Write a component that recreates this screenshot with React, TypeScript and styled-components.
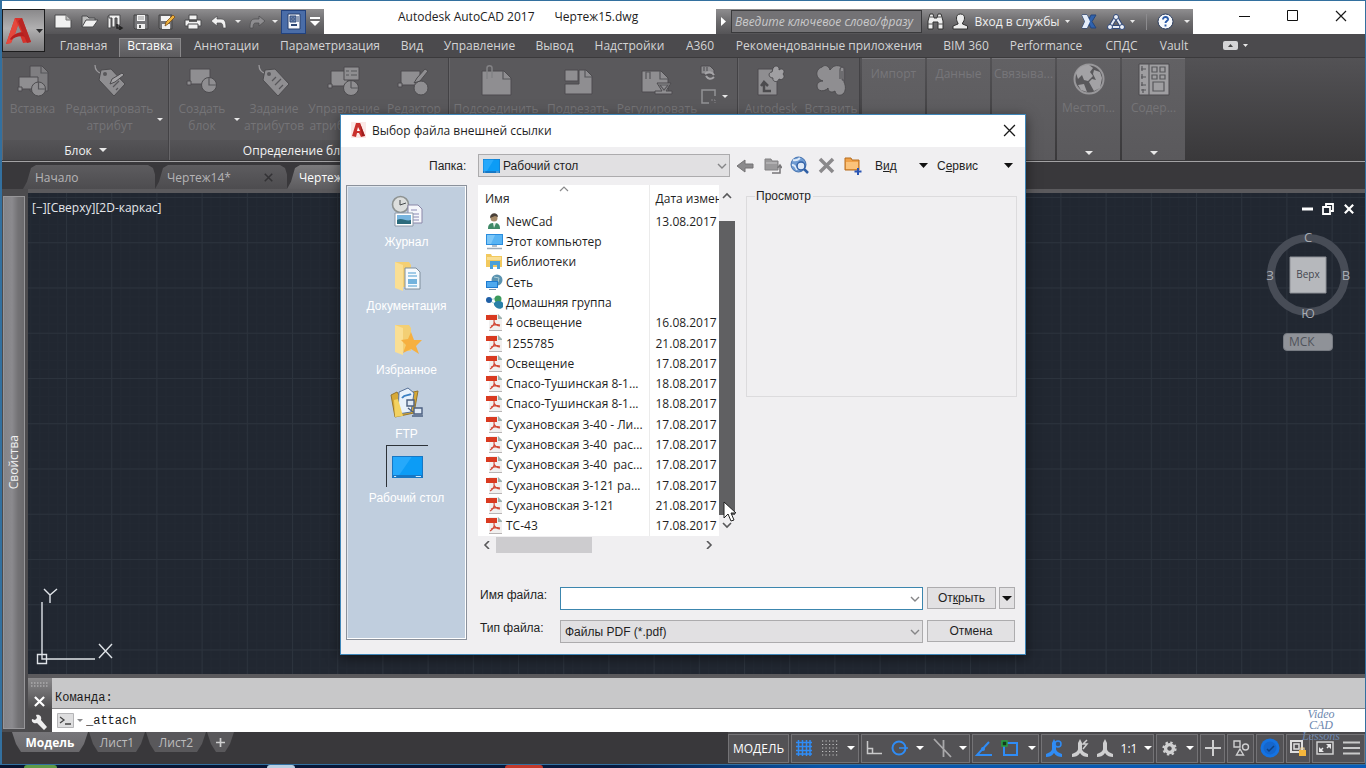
import React from 'react';
import styled, { createGlobalStyle, css } from 'styled-components';

const ui = `"Open Sans", "Noto Sans", sans-serif`;
const dlg = `"Liberation Sans", Arial, sans-serif`;

const GlobalStyle = createGlobalStyle`
  * { box-sizing: border-box; }
  body { margin: 0; background: #0b2a5c; font-family: ${ui}; font-size: 12px; }
  button, input, select { font-family: inherit; font-size: inherit; margin: 0; padding: 0; border-radius: 0; }
  button { background: none; border: 0; color: inherit; white-space: nowrap; }
  svg { display: block; flex: none; }
`;

const Screen = styled.div`
  position: relative;
  display: flex;
  flex-direction: column;
  min-height: 100vh;
  overflow: hidden;
`;

const AppWindow = styled.div`
  flex: 1;
  display: flex;
  flex-direction: column;
  border: solid #33709f;
  border-width: 1px 1px 1px 2px;
  background: #39383b;
`;

/* ---------- header ---------- */

const Header = styled.header`
  display: grid;
  grid-template-columns: 43px 1fr;
  grid-template-rows: 33px 23px;
  background: linear-gradient(#ffffff 33px, #4b4a4d 33px);
`;

const AppButton = styled.button`
  grid-row: 1 / 3;
  height: 43px;
  margin-top: 8px;
  display: flex;
  align-items: center;
  justify-content: center;
  gap: 3px;
  border: 1px solid #1c1c1d;
  background: linear-gradient(#8a898b, #b1b0b1 45%, #7c7b7d);
`;

const TitleRow = styled.div`
  display: flex;
  align-items: flex-end;
  min-width: 0;
`;

const barBg = css`
  background: linear-gradient(#8f8e90, #6c6b6d 50%, #555457);
`;

const QuickBar = styled.div`
  ${barBg}
  height: 25px;
  width: 279px;
  display: flex;
  align-items: center;
  padding-left: 4px;
`;

const QuickButton = styled.button<{ $w: number; $on?: boolean }>`
  width: ${p => p.$w}px;
  height: 24px;
  display: flex;
  align-items: center;
  justify-content: center;
  ${p => p.$on && css`
    background: #4a6da8;
    border: 1px solid #22427e;
  `}
`;

const WindowTitle = styled.h1`
  flex: 1;
  margin: 0;
  padding-left: 74px;
  height: 25px;
  display: flex;
  gap: 20px;
  line-height: 16px;
  font-size: 12px;
  font-weight: 400;
  color: #1d1d1d;
  white-space: nowrap;
`;

const InfoBar = styled.div`
  ${barBg}
  height: 25px;
  width: 477px;
  display: flex;
  align-items: center;
  color: #f0f0f0;
`;

const SearchInput = styled.input`
  width: 191px;
  height: 23px;
  padding: 0 3px;
  font-style: italic;
  color: #e2e2e2;
  background: #737275;
  border: 1px solid #3a3a3c;
  &::placeholder { color: #c9c9ca; opacity: 1; }
`;

const InfoButton = styled.button<{ $w: number; $gap?: number }>`
  width: ${p => p.$w}px;
  height: 24px;
  display: flex;
  align-items: center;
  justify-content: center;
  gap: ${p => p.$gap ?? 5}px;
`;

const InfoDivider = styled.span`
  width: 1px;
  height: 16px;
  margin: 0 8px;
  background: #8c8b8e;
`;

const WindowButtons = styled.div`
  display: flex;
  align-self: flex-start;
  margin-left: 28px;
`;

const WindowButton = styled.button`
  width: 48px;
  height: 30px;
  display: flex;
  align-items: center;
  justify-content: center;
`;

const RibbonTabs = styled.nav`
  display: flex;
  align-items: flex-end;
  padding-left: 3px;
  color: #d4d4d5;
`;

const RibbonTab = styled.button<{ $w: number; $active?: boolean }>`
  width: ${p => p.$w}px;
  height: 19px;
  padding-bottom: 3px;
  line-height: 16px;
  text-align: center;
  ${p => p.$active && css`
    background: linear-gradient(#747376, #5c5b5e);
    box-shadow: inset 1px 1px 0 #89888a, inset -1px 0 0 #89888a;
    color: #ffffff;
  `}
`;

/* ---------- ribbon ---------- */

const Ribbon = styled.div`
  display: flex;
  height: 105px;
  background: linear-gradient(#535255, #39383a);
  border-top: 1px solid #3b3a3c;
  border-bottom: 1px solid #a3a2a4;
`;

const Panel = styled.section<{ $w: number }>`
  width: ${p => p.$w}px;
  height: 102px;
  display: flex;
  flex-direction: column;
  background: #5a595c;
  border-right: 1px solid #434245;
  border-left: 1px solid #666568;
`;

const PanelTools = styled.div`
  flex: 1;
  display: flex;
  padding-top: 7px;
  overflow: hidden;
`;

const PanelTitle = styled.button`
  height: 20px;
  display: flex;
  align-items: center;
  justify-content: center;
  gap: 7px;
  color: #f2f2f2;
  background: linear-gradient(#555457, #49484b);
`;

const Tool = styled.button<{ $w: number }>`
  flex: none;
  width: ${p => p.$w}px;
  display: flex;
  flex-direction: column;
  align-items: center;
  gap: 3px;
  line-height: 17px;
  color: #757477;
`;

const ToolLabel = styled.span`
  white-space: pre;
  text-align: center;
`;

const ToolArrow = styled.button`
  flex: none;
  width: 6px;
  height: 22px;
  margin-top: 43px;
  display: flex;
  align-items: center;
  justify-content: center;
`;

const SmallTools = styled.div`
  display: flex;
  flex-direction: column;
  gap: 8px;
`;

const SmallRow = styled.div`
  display: flex;
  align-items: center;
  gap: 5px;
`;

const NarrowPanel = styled.section`
  width: 63px;
  height: 102px;
  margin-left: 2px;
  display: flex;
  flex-direction: column;
  align-items: center;
  justify-content: space-between;
  padding: 3px 0 5px;
  background: linear-gradient(#626164, #5a595c);
  border-top: 1px solid #77767a;
  color: #77767a;
`;

const NarrowLabel = styled.span`
  line-height: 16px;
  padding-top: 4px;
`;

/* ---------- drawing tabs ---------- */

const FileTabs = styled.nav`
  height: 27px;
  display: flex;
  align-items: flex-end;
  padding-left: 21px;
`;

const FileTab = styled.button<{ $active?: boolean }>`
  width: 132px;
  height: 24px;
  padding: 0 14px 0 12px;
  display: flex;
  align-items: center;
  justify-content: space-between;
  color: ${p => (p.$active ? '#ffffff' : '#b5b4b6')};
  background: ${p => (p.$active ? 'linear-gradient(#7b7a7c, #5d5c5f)' : 'linear-gradient(#5d5c5f, #4d4c4f)')};
  clip-path: polygon(0 100%, 4px 70%, 8px 12%, 13px 0, 125px 0, 130px 12%, 132px 40%, 132px 100%);
`;

/* ---------- work area ---------- */

const Work = styled.div`
  flex: 1;
  display: flex;
  background: #5b5a5d;
`;

const PaletteStrip = styled.aside`
  width: 26px;
  padding: 7px 3px 3px 1px;
  display: flex;
  background: #4c4b4e;
`;

const PaletteTitle = styled.div`
  flex: 1;
  display: flex;
  flex-direction: column;
  align-items: center;
  justify-content: center;
  background: linear-gradient(90deg, #858488, #8b8a8e 40%, #737275 70%, #6a696c);
  border: 1px solid #979699;
  color: #f0f0f0;
  span { writing-mode: vertical-rl; transform: rotate(180deg); line-height: 16px; }
`;

const DrawColumn = styled.div`
  flex: 1;
  min-width: 0;
  display: flex;
  flex-direction: column;
  padding-top: 4px;
`;

const Canvas = styled.main`
  position: relative;
  flex: 1;
  display: flex;
  justify-content: space-between;
  background: #212731;
  color: #e4e6ea;
`;

const GridLayer = styled.svg`
  position: absolute;
  inset: 0;
  width: 100%;
  height: 100%;
`;

const CanvasLeft = styled.div`
  position: relative;
  display: flex;
  flex-direction: column;
  justify-content: space-between;
  padding: 7px 4px 9px;
  line-height: 16px;
`;

const CanvasRight = styled.div`
  position: relative;
  width: 106px;
  padding: 8px 8px 0 0;
  display: flex;
  flex-direction: column;
  align-items: center;
`;

const CanvasControls = styled.div`
  align-self: flex-end;
  display: flex;
  gap: 5px;
  margin-bottom: 8px;
`;

const ViewButton = styled.button`
  width: 16px;
  height: 16px;
  display: flex;
  align-items: center;
  justify-content: center;
`;

const UcsButton = styled.button`
  width: 50px;
  height: 18px;
  margin-top: 8px;
  padding-left: 5px;
  text-align: left;
  line-height: 14px;
  color: #4f535b;
  background: #8f9298;
  border: 1px solid #777b82;
  border-radius: 4px;
`;

const CommandArea = styled.div`
  display: flex;
  height: 58px;
  padding-top: 4px;
  background: #5b5a5d;
`;

const CommandGrip = styled.div`
  width: 24px;
  display: flex;
  flex-direction: column;
  align-items: center;
  justify-content: space-between;
  padding: 4px 1px 1px 0;
  background: linear-gradient(#8a898b, #4b4a4c 60%);
`;

const CommandLines = styled.div`
  flex: 1;
  display: flex;
  flex-direction: column;
  font-family: "Liberation Mono", monospace;
  font-size: 12px;
  color: #1a1a1a;
`;

const CommandHistory = styled.div`
  height: 31px;
  padding: 11px 3px 0;
  line-height: 18px;
  background: #c8c8c9;
  border-bottom: 1px solid #868688;
`;

const CommandPrompt = styled.label`
  flex: 1;
  display: flex;
  align-items: center;
  padding-left: 5px;
  gap: 3px;
  background: #ffffff;
  input { flex: 1; border: 0; outline: 0; background: none; color: inherit; }
`;

/* ---------- status bar ---------- */

const BottomRow = styled.footer`
  height: 32px;
  display: flex;
  justify-content: space-between;
`;

const LayoutTabs = styled.nav`
  display: flex;
  padding-left: 10px;
`;

const LayoutTab = styled.button<{ $w: number; $active?: boolean }>`
  width: ${p => p.$w}px;
  height: 20px;
  margin-right: 1px;
  display: flex;
  align-items: center;
  justify-content: center;
  font-weight: ${p => (p.$active ? 700 : 400)};
  color: ${p => (p.$active ? '#ffffff' : '#bdbcbe')};
  background: ${p => (p.$active ? 'linear-gradient(#77767a, #69686b)' : '#59585b')};
  clip-path: polygon(0 0, 100% 0, calc(100% - 4px) 60%, calc(100% - 9px) 100%, 9px 100%, 4px 60%);
`;

const StatusBar = styled.div`
  display: flex;
  gap: 2px;
  height: 31px;
  padding-top: 2px;
  background: #4a494c;
  color: #ffffff;
`;

const StatusGroup = styled.div`
  display: flex;
  background: #535255;
  outline: 1px solid #747376;
  outline-offset: -1px;
`;

const StatusButton = styled.button<{ $w: number }>`
  width: ${p => p.$w}px;
  height: 28px;
  display: flex;
  align-items: center;
  justify-content: center;
`;

const Taskbar = styled.div`
  height: 3px;
  display: flex;
  background: linear-gradient(90deg, #07142f, #071a3f 45%, #0a55a8 60%, #0a5cb8);
`;

const TaskItem = styled.span<{ $left: number; $w: number; $c: string }>`
  width: ${p => p.$w}px;
  margin-left: ${p => p.$left}px;
  border-radius: 8px 8px 0 0;
  background: ${p => p.$c};
`;

const Watermark = styled.div`
  position: absolute;
  right: 22px;
  bottom: 26px;
  width: 46px;
  line-height: 11px;
  font-family: "Liberation Serif", serif;
  font-size: 12px;
  font-style: italic;
  text-align: center;
  color: #6d87ae;
  pointer-events: none;
`;

/* ---------- dialog ---------- */

const DialogLayer = styled.div`
  position: absolute;
  inset: 0;
  display: flex;
  align-items: flex-start;
  justify-content: center;
  padding-top: 114px;
`;

const Dialog = styled.section`
  position: relative;
  width: 686px;
  height: 541px;
  display: flex;
  flex-direction: column;
  background: #f0eff1;
  border: 1px solid #3f86b8;
  box-shadow: 0 3px 12px rgba(0, 0, 0, 0.5);
  font-family: ${dlg};
  color: #1f1f1f;
`;

const DialogTitle = styled.header`
  height: 32px;
  display: flex;
  align-items: center;
  gap: 6px;
  padding: 0 3px 2px 10px;
  background: #ffffff;
  font-family: ${ui};
  h2 { flex: 1; margin: 0; font-size: 12px; font-weight: 400; }
`;

const DialogBody = styled.div`
  flex: 1;
  display: flex;
  flex-direction: column;
  padding: 7px 8px 14px 5px;
`;

const FolderRow = styled.div`
  display: flex;
  align-items: center;
  height: 23px;
  label { width: 132px; padding-left: 83px; }
`;

const Combo = styled.div<{ $w: number; $edit?: boolean }>`
  position: relative;
  width: ${p => p.$w}px;
  height: 23px;
  display: flex;
  color: #8b8b8d;
  select, input {
    width: 100%;
    padding: 0 20px 0 4px;
    appearance: none;
    outline: 0;
    color: #1f1f1f;
    background: ${p => (p.$edit ? '#ffffff' : '#e1e0e2')};
    border: 1px solid ${p => (p.$edit ? '#3c86ae' : '#acabad')};
  }
`;

const FolderSelect = styled.select`
  && { padding-left: 24px; }
`;

const ComboArrow = styled.span`
  position: absolute;
  right: 3px;
  top: 8px;
  pointer-events: none;
`;

const ComboIcon = styled.span`
  position: absolute;
  left: 5px;
  top: 5px;
  pointer-events: none;
`;

const IconButton = styled.button<{ $w: number }>`
  width: ${p => p.$w}px;
  height: 23px;
  display: flex;
  align-items: center;
  justify-content: center;
`;

const MenuButton = styled.button<{ $w: number }>`
  width: ${p => p.$w}px;
  height: 23px;
  margin-left: 9px;
  display: flex;
  align-items: center;
  justify-content: space-between;
  color: #1f1f1f;
`;

const Middle = styled.div`
  flex: 1;
  display: flex;
  margin-top: 8px;
`;

const Places = styled.nav`
  width: 121px;
  height: 455px;
  padding-top: 3px;
  background: #c0cede;
  border: 1px solid #8b919b;
  box-shadow: inset -1px -1px 0 #ffffff, inset 1px 1px 0 #dfe6ee;
`;

const Place = styled.button<{ $active?: boolean }>`
  width: 100%;
  height: 64px;
  display: flex;
  flex-direction: column;
  align-items: center;
  color: #ffffff;
  line-height: 16px;
  span {
    width: 42px;
    height: 42px;
    margin-bottom: 3px;
    display: flex;
    align-items: center;
    justify-content: center;
    border: solid ${p => (p.$active ? '#2d3238' : 'transparent')};
    border-width: 1px 0 0 1px;
  }
`;

const Right = styled.div`
  flex: 1;
  margin-left: 11px;
  display: flex;
  flex-direction: column;
  justify-content: space-between;
`;

const ListRow = styled.div`
  display: flex;
  justify-content: space-between;
`;

const ListBox = styled.div`
  width: 257px;
  display: grid;
  grid-template-columns: 241px 16px;
  grid-template-rows: 351px 17px;
`;

const TableClip = styled.div`
  overflow: hidden;
  background: #ffffff;
  font-family: ${ui};
`;

const FileTable = styled.table`
  width: 290px;
  height: 351px;
  table-layout: fixed;
  border-collapse: collapse;
  th, td { padding: 0 0 0 6px; text-align: left; font-weight: 400; white-space: pre; overflow: hidden; }
  th { position: relative; height: 26px; }
  tr > :first-child { width: 171px; padding-left: 8px; border-right: 1px solid #ebebeb; }
  thead tr > :first-child { padding-left: 7px; }
`;

const FileName = styled.span`
  display: flex;
  align-items: center;
  gap: 3px;
`;

const SortMark = styled.span`
  position: absolute;
  left: 81px;
  top: 0;
`;

const VScroll = styled.div`
  display: flex;
  flex-direction: column;
  align-items: center;
  justify-content: space-between;
  padding: 7px 0;
`;

const VThumb = styled.div`
  width: 16px;
  height: 294px;
  margin-top: 15px;
  background: #606062;
`;

const HScroll = styled.div`
  display: flex;
  align-items: center;
  padding: 0 5px 0 4px;
`;

const HThumb = styled.div`
  width: 96px;
  height: 16px;
  margin: 0 auto 0 4px;
  background: #cdcccf;
`;

const Preview = styled.fieldset`
  width: 271px;
  height: 208px;
  margin: 4px 0 0;
  padding: 0 8px;
  border: 1px solid #dcdbdd;
  legend { padding: 0 2px 0 1px; line-height: 14px; }
`;

const Fields = styled.div`
  display: grid;
  grid-template-columns: 82px 363px 1fr;
  row-gap: 10px;
  padding-right: 2px;
  margin-bottom: -3px;
  label { padding: 1px 0 0 2px; }
`;

const Actions = styled.div`
  display: flex;
  gap: 3px;
  padding-left: 4px;
`;

const PushButton = styled.button<{ $w?: number }>`
  ${p => (p.$w ? `width: ${p.$w}px;` : 'flex: 1;')}
  height: 22px;
  display: flex;
  align-items: center;
  justify-content: center;
  background: #e2e1e3;
  border: 1px solid #adacae;
  white-space: pre;
`;

const Pointer = styled.svg`
  position: absolute;
  left: 382px;
  top: 386px;
`;

/* ---------- drawings ---------- */

const Down = ({ w = 6, c = '#e8e8e8' }: { w?: number; c?: string }) => (
  <svg width={w} height={Math.ceil(w / 2)} viewBox="0 0 10 5" preserveAspectRatio="none"><path d="M0 0h10L5 5z" fill={c} /></svg>
);

const Chevron = ({ r = 0, c = '#58585a', w = 1.6 }: { r?: number; c?: string; w?: number }) => (
  <svg width="10" height="8" viewBox="-5 -4 10 8"><path d="M-4 -2L0 2L4 -2" transform={`rotate(${r})`} fill="none" stroke={c} strokeWidth={w} /></svg>
);

const Logo = ({ s = 28 }: { s?: number }) => (
  <svg width={s} height={s} viewBox="0 0 28 28">
    <path d="M10 1h7l9 24-8 1-3-8-5-1-4 9-5 1z" fill="#d6322c" />
    <path d="M13 8l-3 9h7z" fill="#8f8f92" />
    <path d="M10 1l-9 26 5-1 4-9 3-9z" fill="#e5483d" />
    <path d="M5 22c4-6 11-8 16-6l2 5c-6-3-12-2-17 2z" fill="#b61f1f" />
    <path d="M17 1l9 24-4 1-9-22z" fill="#b92624" />
  </svg>
);

const DialogLogo = () => (
  <svg width="15" height="16" viewBox="0 0 15 16">
    <rect width="15" height="16" fill="#fbe9e7" />
    <path d="M5 1h4l5 13-4 1-2-4H6l-1 4-4-1z" fill="#c9302c" />
    <path d="M7 5L6 9h3z" fill="#fff" />
    <path d="M9 1l5 13-3 0z" fill="#9d1f1f" />
  </svg>
);

const q = { fill: '#f1f1f1', stroke: '#4a4a4c', strokeWidth: 1 };
const NewIcon = () => <svg width="18" height="15" viewBox="0 0 18 15"><path d="M1 1h11l5 5v8H1z" {...q} /><path d="M12 1v5h5" fill="#bbb" stroke="#777" /></svg>;
const OpenIcon = () => <svg width="18" height="15" viewBox="0 0 18 15"><path d="M1 13V2h5l2 2h6v3" {...q} fill="#bdbdbd" /><path d="M1 13L5 6h12l-5 7z" {...q} /></svg>;
const OpenWebIcon = () => <svg width="18" height="17" viewBox="0 0 18 17"><path d="M2 3h3v12H2z" {...q} /><path d="M3 5V2h11v10h-3V5H9v9H6V5z" {...q} /><path d="M11 11v4h4M13 13l3 2-3 2" fill="none" stroke="#222" strokeWidth="1.500" /></svg>;
const SaveIcon = () => <svg width="16" height="16" viewBox="0 0 16 16"><path d="M1 1h14v14H2l-1-1z" fill="#77777a" stroke="#444" /><path d="M4 1h8v6H4z" fill="#f4f4f4" /><path d="M5 3h6M5 5h6" stroke="#999" /><path d="M4 10h8v5H4z" fill="#efefef" /><path d="M6 11h2v3H6z" fill="#555" /></svg>;
const SaveAsIcon = () => <svg width="18" height="16" viewBox="0 0 18 16"><path d="M1 1h13v14H2l-1-1z" fill="#77777a" stroke="#444" /><path d="M3 2h9v5H3z" fill="#f4f4f4" /><path d="M4 10h8v5H4z" fill="#efefef" /><path d="M7 12L8 8l7-7 2 2-7 7z" fill="#eeb23c" stroke="#7b4c17" strokeWidth=".8" /></svg>;
const PrintIcon = () => <svg width="18" height="16" viewBox="0 0 18 16"><path d="M5 1h8v5H5z" {...q} /><path d="M1 6h16v6H1z" {...q} /><path d="M4 10h10v5H4z" {...q} /><path d="M5 7h8" stroke="#333" strokeWidth="1.500" /></svg>;
const UndoIcon = ({ c = '#f1f1f1', f = false }: { c?: string; f?: boolean }) => (
  <svg width="16" height="14" viewBox="0 0 16 14"><path d="M0 6l6-5v3h4c4 0 5 3 5 9h-3c0-4-1-5-3-5H6v3z" transform={f ? 'translate(16 0) scale(-1 1)' : undefined} fill={c} stroke="#4c4c4e" strokeWidth=".7" /></svg>
);
const WorkspaceIcon = () => <svg width="14" height="17" viewBox="0 0 14 17"><path d="M1 1h12v15H1z" fill="#f4f6fa" stroke="#29406d" /><path d="M3 3h6v6H3z" fill="#6d85b0" stroke="#2d4674" /><path d="M5 5h2v2H5zM11 3v6" stroke="#2d4674" fill="#fff" /><path d="M4 12h6" stroke="#2d4674" strokeWidth="2" /></svg>;
const QuickMore = () => <svg width="10" height="9" viewBox="0 0 10 9"><path d="M0 1h10" stroke="#fff" strokeWidth="2" /><path d="M0 4h10L5 9z" fill="#fff" /></svg>;

const Binoculars = () => <svg width="17" height="17" viewBox="0 0 17 17"><path d="M3 1h3l1 4h3l1-4h3l2 7v8h-5v-7H6v7H1V8z" fill="#eee" stroke="#333" /><path d="M1 11h5M11 11h5M3 4h3M11 4h3" stroke="#555" /></svg>;
const UserIcon = () => <svg width="17" height="17" viewBox="0 0 17 17"><path d="M8.500 1c3 0 4 2 4 4s-1 4-2 5v1l5 2v3H1v-3l5-2v-1C5 9 4.500 7 4.500 5s1-4 4-4z" fill="#ececec" stroke="#333" /></svg>;
const ExchangeIcon = () => <svg width="16" height="15" viewBox="0 0 16 15"><path d="M1 1h5l2 4 2-4h5l-4 6.500L15 14h-5l-2-4-2 4H1l3-6.500z" fill="#2f62ad" stroke="#24457c" /><path d="M1 1h5l3 6.500L6 14H1l3-6.500z" fill="#e6edf8" /></svg>;
const A360Icon = () => <svg width="18" height="16" viewBox="0 0 18 16"><path d="M9 3L3 13h12z" fill="none" stroke="#324a7a" strokeWidth="4" /><path d="M9 3L3 13h12z" fill="none" stroke="#e8edf6" strokeWidth="2" /><circle cx="9" cy="3" r="2.500" fill="#eef2f9" stroke="#324a7a" /><circle cx="3" cy="13" r="2.500" fill="#eef2f9" stroke="#324a7a" /><circle cx="15" cy="13" r="2.500" fill="#eef2f9" stroke="#324a7a" /></svg>;
const HelpIcon = () => <svg width="17" height="17" viewBox="0 0 17 17"><circle cx="8.500" cy="8.500" r="7.500" fill="#f7f9fc" stroke="#2b3d5f" /><path d="M6 6.500c0-3.500 5.500-3 5 0-.3 1.500-2.500 1.700-2.500 3.500M8.500 11.500v2" fill="none" stroke="#2a5aa8" strokeWidth="1.900" /></svg>;

const r1 = { fill: '#8f8e91', stroke: '#4c4b4e', strokeWidth: 1 };
const dk = { fill: 'none', stroke: '#57565a', strokeWidth: 1.2 };
const InsertIcon = () => (
  <svg width="32" height="32" viewBox="0 0 32 32"><path d="M13 1h12l6 6v19H13z" {...r1} fill="#7f7e81" /><path d="M24 1v7h7" {...dk} /><path d="M2 12h19v12H2z" {...r1} /><circle cx="21.500" cy="24" r="7" {...r1} /><path d="M21.500 17v7h7" {...dk} /><path d="M1 22h4v4H1z" {...r1} /></svg>
);
const EditAttrIcon = () => (
  <svg width="34" height="32" viewBox="0 0 34 32"><path d="M2 0c0 5 3 8 8 9" fill="none" stroke="#9a999c" strokeWidth="1.300" /><path d="M8 5l10-1 14 15-11 12L6 15z" {...r1} /><circle cx="12" cy="9" r="2" fill="#59585b" /><path d="M18 18l3-3M20 22l6-6M23 25l2-2" {...dk} /><path d="M17 19l2-5L29 8l2 2-9 7z" {...r1} fill="#a4a3a6" /></svg>
);
const CreateBlockIcon = () => (
  <svg width="32" height="32" viewBox="0 0 32 32"><path d="M4 4h20v15H4z" {...r1} /><circle cx="23" cy="20" r="7.500" {...r1} /><path d="M23 12.500V20h7" {...dk} /><path d="M1 16h4v4H1z" {...r1} /></svg>
);
const DefineAttrIcon = () => (
  <svg width="34" height="32" viewBox="0 0 34 32"><path d="M2 0c0 5 3 8 8 9" fill="none" stroke="#9a999c" strokeWidth="1.300" /><path d="M8 5l10-1 14 15-11 12L6 15z" {...r1} /><circle cx="12" cy="9" r="2" fill="#59585b" /><path d="M15 16l4-4M18 20l6-6M22 24l4-4" {...dk} /></svg>
);
const ManageAttrIcon = () => (
  <svg width="34" height="32" viewBox="0 0 34 32"><path d="M4 6h17v15H4z" {...r1} /><circle cx="24" cy="23" r="7.500" {...r1} /><path d="M24 23v-7M24 23h7" {...dk} /><path d="M17 2h15v13H17z" {...r1} /><path d="M19 6h3M19 10h3M24 6h6M24 10h6" {...dk} /><path d="M1 19h4v4H1z" {...r1} /></svg>
);
const BlockEditIcon = () => (
  <svg width="34" height="32" viewBox="0 0 34 32"><path d="M4 6h19v14H4z" {...r1} /><circle cx="24" cy="23" r="7" {...r1} /><path d="M17 18l3-5 8-9 3 2-8 10z" {...r1} /><path d="M1 18h4v4H1z" {...r1} /></svg>
);
const AttachIcon = () => (
  <svg width="32" height="32" viewBox="0 0 32 32"><path d="M2 6h22l7 7v17H2z" {...r1} /><path d="M23 6v8h8" {...dk} /><path d="M7 14V3c0-3 5-3 5 0v10" fill="none" stroke="#838285" strokeWidth="1.500" /></svg>
);
const ClipIcon = () => (
  <svg width="30" height="32" viewBox="0 0 30 32"><path d="M16 5h7l6 6v18H2V19h14z" {...r1} /><path d="M2 5h13v11H2z" {...r1} /><path d="M22 5v7h7" {...dk} /></svg>
);
const AdjustIcon = () => (
  <svg width="34" height="32" viewBox="0 0 34 32"><path d="M2 6h19l7 7v14H2z" {...r1} /><path d="M6 14V7h4v7M20 6v8h8" {...dk} /><path d="M15 29h17v-3h-6l5-8H17l5 8h-7z" {...r1} /><path d="M20 20h8l-4 5z" {...dk} /></svg>
);
const LayersIcon = () => (
  <svg width="16" height="15" viewBox="0 0 16 15"><path d="M1 1h9l4 4v4H1z" {...r1} /><path d="M4 2v4M7 2v4" {...dk} /><path d="M5 9c3-3 7-2 9 1M14 12c-3 3-6 2-8-1" fill="none" stroke="#a5a4a7" strokeWidth="2" /></svg>
);
const FrameIcon = () => (
  <svg width="17" height="17" viewBox="0 0 17 17"><path d="M15 8V2H2v13h7" fill="none" stroke="#939295" strokeWidth="1.500" /><path d="M11 12h4v3" fill="none" stroke="#858487" strokeDasharray="2 1" /></svg>
);
const Cloud360Icon = () => (
  <svg width="32" height="32" viewBox="0 0 32 32"><path d="M3 4h19v26H3z" {...r1} /><path d="M18 3c3-4 7-1 6 2 3-3 7 1 4 4 3 3-1 7-4 5-1 4-7 3-6-1-5 0-5-6-1-6z" {...r1} fill="#a09fa2" /><path d="M16 26H9v-7M6 21l3-4 4 4" fill="none" stroke="#4c4b4e" strokeWidth="2.500" /></svg>
);
const CloudInsertIcon = () => (
  <svg width="34" height="32" viewBox="0 0 34 32"><path d="M8 2c3-3 7-1 8 3 4-6 9-5 14-2v14c2 4 2 9-1 12-4 3-8 0-8-3-3 2-7 1-7-3-3 4-11 4-11-2 0-4 4-5 6-5C2 14 0 5 8 2z" {...r1} /><path d="M26 14V5c0-4 5-4 5 0v8c0 3-3 3-3 0V6" {...dk} /></svg>
);
const GlobeIcon = () => (
  <svg width="34" height="34" viewBox="0 0 34 34"><circle cx="17" cy="17" r="14.500" fill="#59585b" stroke="#98979a" strokeWidth="2" /><path d="M4 11c3-6 7-8 13-8l4 3-3 4 3 4-5 5-4-1-2-5-4 4zM22 8l6 2 2 6-2 10-6 3-5-9 3-3 4 1-3-6zM6 23l6-1 3 8-6-2z" fill="#a3a2a5" /></svg>
);
const ContentIcon = () => (
  <svg width="32" height="34" viewBox="0 0 32 34"><path d="M1 2h30v31H1z" fill="#9f9ea1" stroke="#4c4b4e" /><path d="M11 2v31M4 4v5M3 7h5M4 12v5M3 15h5M4 20v4M3 23h5M5 27v4M3 28h5M14 5h5v5h-5zM22 5h5v5h-5zM14 13h5v4h-5zM22 13h5v4h-5zM15 20h11v9H15z" {...dk} /></svg>
);
const RibbonToggle = () => <svg width="15" height="9" viewBox="0 0 15 9"><rect width="15" height="9" rx="2" fill="#d5d5d6" /><path d="M5 6l2.500-3L10 6z" fill="#444" /></svg>;

const Cross = ({ s = 12, c = '#1a1a1a', w = 1.2 }: { s?: number; c?: string; w?: number }) => (
  <svg width={s} height={s} viewBox="0 0 12 12"><path d="M1 1l10 10M11 1L1 11" stroke={c} strokeWidth={w} /></svg>
);

const Desktop = ({ w = 17, h = 14 }: { w?: number; h?: number }) => (
  <svg width={w} height={h} viewBox="0 0 30 22" preserveAspectRatio="none"><path d="M0 0h30v22H0z" fill="#1777c4" /><path d="M1 1h28v18H1z" fill="#0c9cf6" /><path d="M1 1h18L7 19H1z" fill="#26a9fb" /><path d="M2 20.500h2M23 20.500h5" stroke="#d6ecfb" /></svg>
);
const BackIcon = () => <svg width="18" height="16" viewBox="0 0 18 16"><path d="M1 8l8-6v4h8v4H9v4z" fill="#8b8a8c" stroke="#747375" /></svg>;
const UpIcon = () => <svg width="18" height="18" viewBox="0 0 18 18"><path d="M1 2h6l1 2h6v9H1z" fill="#9a999b" stroke="#818082" /><path d="M2 6h11" stroke="#c7c6c8" /><path d="M8 16h8V9M13.500 11L16 8l2 3" fill="none" stroke="#777678" strokeWidth="1.500" /></svg>;
const WebIcon = () => <svg width="19" height="19" viewBox="0 0 19 19"><circle cx="8.500" cy="8.500" r="7.500" fill="#6e9bd3" stroke="#4572ae" /><path d="M3 4c3 1 5 0 7-2M2 9c3 0 4 2 5 5" stroke="#dce9f8" strokeWidth="2" fill="none" /><circle cx="11" cy="10" r="4" fill="#dfeaf8" stroke="#2f5fa5" strokeWidth="1.500" /><path d="M14 13l4 4" stroke="#2f5fa5" strokeWidth="2.500" /></svg>;
const DeleteIcon = () => <svg width="17" height="17" viewBox="0 0 17 17"><path d="M2 2l13 13M15 2L2 15" stroke="#8a898b" strokeWidth="3.500" /></svg>;
const NewFolderIcon = () => <svg width="18" height="18" viewBox="0 0 18 18"><path d="M1 1h6l1 2h7v10H1z" fill="#f0a24a" stroke="#b66d1e" /><path d="M2 5h12v7H2z" fill="#fbc37b" /><path d="M14 11v7M10.500 14.500h7" stroke="#2a55b4" strokeWidth="2" /></svg>;

const PdfIcon = () => (
  <svg width="17" height="17" viewBox="0 0 17 17"><path d="M3 0h9l4 4v12H3z" fill="#f1f0ef" /><path d="M12 0l4 4v1h-4z" fill="#9fb2ae" /><path d="M3 16.500h13" stroke="#b9b5b5" /><path d="M0 1h11v5H0z" fill="#d93a20" /><path d="M8 6c1 4-2 7-4 8M8 8c1 2 3 4 6 4M5 12c3-1 6-2 9-1" fill="none" stroke="#d24a38" strokeWidth="1.200" /></svg>
);
const PersonIcon = () => <svg width="17" height="17" viewBox="0 0 17 17"><path d="M2 16c0-5 2-6 6-6s6 1 6 6z" fill="#3f8a67" /><path d="M7 10l1 5 2-5z" fill="#e3efe9" /><circle cx="8" cy="5" r="3.500" fill="#a58a68" /><path d="M4 5c0-6 8-6 8-1L9 3z" fill="#4a4038" /></svg>;
const PcIcon = () => <svg width="17" height="17" viewBox="0 0 17 17"><path d="M0 1h17v11H0z" fill="#2a8dde" /><path d="M1 2h15v9H1z" fill="#58b4f4" /><path d="M1 2h8l-4 9H1z" fill="#7cc7f8" /><path d="M1 15.500h15M6 13h5" stroke="#9caab8" strokeWidth="1.500" /></svg>;
const LibIcon = () => <svg width="17" height="17" viewBox="0 0 17 17"><path d="M0 1h5l1 2h10v11H0z" fill="#f2c95e" /><path d="M1 4h14v3H1z" fill="#f9de93" /><path d="M4 16V8h10v8h-3v-4H7v4z" fill="#4aa0d8" /></svg>;
const NetIcon = () => <svg width="17" height="17" viewBox="0 0 17 17"><circle cx="11" cy="6" r="5.500" fill="#5b93b0" /><path d="M8 3l5 1-1 4" stroke="#aed0d8" fill="none" /><path d="M0 7h12v7H0z" fill="#1e7bd0" /><path d="M1 8h10v5H1z" fill="#4fa9ee" /><path d="M3 15.500h7" stroke="#7e93a8" /></svg>;
const HomeIcon = () => <svg width="17" height="15" viewBox="0 0 17 15"><path d="M3 5l9-2v8z" fill="none" stroke="#9ccfc8" /><circle cx="3" cy="5" r="3" fill="#1f5fa6" /><circle cx="12" cy="4" r="3.500" fill="#3d9a5d" /><path d="M8 8c3-3 8-2 9 0v4c-2 3-7 2-9-2z" fill="#2a80a8" /></svg>;

const JournalIcon = () => (
  <svg width="32" height="32" viewBox="0 0 32 32"><circle cx="9.500" cy="9.500" r="8" fill="#dcdedd" stroke="#8d9291" strokeWidth="1.600" /><path d="M9 5v5l6-2" fill="none" stroke="#44494b" /><path d="M17 10h10l4 4v14H17z" fill="#f5f6fb" stroke="#8a87a8" /><path d="M20 15h6M20 19h8M20 22h8M20 25h8" stroke="#8a89b4" /><path d="M4 18h18v13H4z" fill="#fff" stroke="#8b98a8" /><path d="M6 20h14v9H6z" fill="#78b5df" /><path d="M6 25c5-3 9 2 14 0v4H6z" fill="#2c6b7c" /></svg>
);
const DocsIcon = () => (
  <svg width="32" height="32" viewBox="0 0 32 32"><path d="M4 3h14l2 3v22H4z" fill="#f3cf74" /><path d="M4 3l8 3v26l-8-3z" fill="#fadf94" /><path d="M14 9h11l4 4v17H14z" fill="#f6fafd" stroke="#7e8e9c" /><path d="M17 14h8M17 17h9M17 27h9" stroke="#4a9bd0" /><path d="M17 20h9v5h-9z" fill="#74b3dd" /></svg>
);
const FavIcon = () => (
  <svg width="32" height="32" viewBox="0 0 32 32"><path d="M4 2h14l2 3v23H4z" fill="#f3cf74" /><path d="M4 2l8 3v27l-8-3z" fill="#fadf94" /><path d="M20 9l3 8 8 0-6 6 3 8-8-5-8 4 3-8-5-5 7-1z" fill="#f6b040" /></svg>
);
const FtpIcon = () => (
  <svg width="34" height="32" viewBox="0 0 34 32"><path d="M1 8l6-3 2 3 19-4-4 22-19 4z" fill="#d7a936" stroke="#96762c" /><path d="M9 5l9-4 6 5-3 19-13 2z" fill="#e8f1fb" stroke="#577198" /><path d="M12 11c3-4 6-2 9-4" stroke="#3a7fc3" strokeWidth="2" fill="none" /><path d="M4 13l4-1 5 17-8 1z" fill="#f3d261" /><path d="M17 13h7v6h-7zM24 21h8v6h-8zM18 21l5 4" fill="#dfe9f5" stroke="#4b5f80" strokeWidth="1.400" /><path d="M22 29h11" stroke="#4b5f80" strokeWidth="1.500" /></svg>
);

const blue = '#2f8cf5';
const GridIcon = () => <svg width="16" height="16" viewBox="0 0 16 16"><path d="M2.500 0v16M6.500 0v16M10.500 0v16M14 0v16M0 2.500h16M0 6.500h16M0 10.500h16M0 14h16" stroke={blue} strokeWidth="1.500" /></svg>;
const SnapIcon = () => <svg width="16" height="16" viewBox="0 0 16 16"><path d="M0 1h16M0 4.500h16M0 8h16M0 11.500h16M0 15h16" stroke="#c5c5c6" strokeWidth="1.200" strokeDasharray="1.200 2.300" /></svg>;
const OrthoIcon = () => <svg width="16" height="16" viewBox="0 0 16 16"><path d="M1.500 1v12.500H16M1.500 8.500h5v5" fill="none" stroke="#c9c9ca" strokeWidth="1.500" /></svg>;
const PolarIcon = () => <svg width="17" height="16" viewBox="0 0 17 16"><circle cx="8" cy="8" r="6.500" fill="none" stroke={blue} strokeWidth="2" /><path d="M8 8h9" stroke={blue} strokeWidth="1.500" /></svg>;
const IsoIcon = () => <svg width="19" height="20" viewBox="0 0 19 20"><path d="M1 1l17 18M10.500 2v17" stroke="#a9a8aa" strokeWidth="1.800" fill="none" /></svg>;
const TrackIcon = () => <svg width="18" height="17" viewBox="0 0 18 17"><path d="M14 2L2 15h15" fill="none" stroke={blue} strokeWidth="2" /><circle cx="8" cy="9" r="2" fill={blue} /></svg>;
const OsnapIcon = () => <svg width="18" height="17" viewBox="0 0 18 17"><path d="M3 3h13v12H3z" fill="none" stroke={blue} strokeWidth="2" /><path d="M1 1h5v5H1z" fill="#143b1b" stroke="#27a042" strokeWidth="1.500" /></svg>;
const AnnoIcon = ({ c = '#cfcfd0', k = 0 }: { c?: string; k?: number }) => (
  <svg width="18" height="19" viewBox="0 0 18 19"><path d="M9 0l2 4v6c0 2 3 4 6 5v3c-3 0-6-1-8-4-2 3-5 4-8 4v-3c3-1 6-3 6-5V4z" fill={c} />{k === 1 && <circle cx="13" cy="5" r="3" fill="#3a5478" stroke={c} strokeWidth="1.500" />}{k === 2 && <path d="M16 1l-4 4h4l-4 5" fill="none" stroke={c} strokeWidth="1.500" />}</svg>
);
const GearIcon = () => <svg width="15" height="15" viewBox="-8 -8 16 16"><circle r="4.200" fill="none" stroke="#d0d0d1" strokeWidth="3.600" /><circle r="6.400" fill="none" stroke="#d0d0d1" strokeWidth="2.400" strokeDasharray="2.500 2.530" /></svg>;
const PlusIcon = ({ s = 16 }: { s?: number }) => <svg width={s} height={s} viewBox="0 0 16 16"><path d="M8 0v16M0 8h16" stroke="#cfcfd0" strokeWidth={s < 12 ? 3 : 2} /></svg>;
const IsolateIcon = () => <svg width="18" height="18" viewBox="0 0 18 18"><path d="M2 2h6v6H2zM8 10l3.500 6h-7z" fill="none" stroke="#cfcfd0" strokeWidth="1.400" /><circle cx="13.500" cy="8" r="3" fill="none" stroke="#cfcfd0" strokeWidth="1.400" /></svg>;
const PerfIcon = () => <svg width="20" height="20" viewBox="0 0 20 20"><circle cx="10" cy="10" r="9.500" fill="#1573e2" /><circle cx="10" cy="10" r="6.500" fill="#1566cc" /><path d="M7 11l2 2 5-5" fill="none" stroke="#0d4284" strokeWidth="1.500" /></svg>;
const LockUiIcon = () => <svg width="18" height="18" viewBox="0 0 18 18"><path d="M2 2h11v11H2z" fill="none" stroke="#dedede" strokeWidth="2" /><path d="M5 5h5v5H5z" fill="none" stroke="#dedede" strokeWidth="1.500" /><path d="M10 11h7v6h-7z" fill="#f4b63c" /><path d="M12 11V9h3v2" fill="none" stroke="#f4d89a" strokeWidth="1.200" /></svg>;
const FullIcon = () => <svg width="18" height="14" viewBox="0 0 18 14"><path d="M1 1h16v12H1z" fill="none" stroke="#cfcfd0" strokeWidth="1.500" /><path d="M3 6v5h5zM15 8V3h-5z" fill="#e9e9ea" /><path d="M5 9l2-2M13 5l-2 2" stroke="#e9e9ea" strokeWidth="1.500" /></svg>;
const MenuIcon = () => <svg width="17" height="14" viewBox="0 0 17 14"><path d="M0 1.500h17M0 7h17M0 12.500h17" stroke="#c9c9ca" strokeWidth="2" /></svg>;

const ViewCube = () => (
  <svg width="98" height="100" viewBox="-49 -50 98 100" fontFamily={ui} fontSize="13" fill="#a7abb2" textAnchor="middle">
    <circle r="37" fill="none" stroke="#474c56" strokeWidth="8" />
    <path d="M-18 -18h36v36h-36z" fill="#b6b8bc" stroke="#8d9096" />
    <text fontSize="10" y="3" fill="#43474f">Верх</text>
    <text y="-33">С</text>
    <text y="43">Ю</text>
    <text x="-38" y="5">З</text>
    <text x="38" y="5">В</text>
  </svg>
);

const UcsMark = () => (
  <svg width="84" height="80" viewBox="0 0 84 80" fill="none" stroke="#dfe3e8" strokeWidth="1.400">
    <path d="M10 17v57h53M5.500 69.500h9v9h-9z" transform="translate(0 0)" />
    <path d="M12 4l6 6 7-6M18 10v8M67 59l13 14M80 59L67 73" />
  </svg>
);

/* ---------- data ---------- */

const ribbonTabs: [string, number][] = [
  ['Главная', 71], ['Вставка', 62], ['Аннотации', 91], ['Параметризация', 116], ['Вид', 48],
  ['Управление', 87], ['Вывод', 63], ['Надстройки', 87], ['A360', 54], ['Рекомендованные приложения', 204],
  ['BIM 360', 70], ['Performance', 90], ['СПДС', 61], ['Vault', 44],
];

const places: [string, React.ReactNode][] = [
  ['Журнал', <JournalIcon />], ['Документация', <DocsIcon />], ['Избранное', <FavIcon />],
  ['FTP', <FtpIcon />], ['Рабочий стол', <Desktop w={31} h={22} />],
];

const files: [string, string, React.ReactNode?][] = [
  ['NewCad', '13.08.2017 21:10', <PersonIcon />],
  ['Этот компьютер', '', <PcIcon />],
  ['Библиотеки', '', <LibIcon />],
  ['Сеть', '', <NetIcon />],
  ['Домашняя группа', '', <HomeIcon />],
  ['4 освещение', '16.08.2017 15:20'],
  ['1255785', '21.08.2017 9:14'],
  ['Освещение', '17.08.2017 7:40'],
  ['Спасо-Тушинская 8-1...', '18.08.2017 12:02'],
  ['Спасо-Тушинская 8-1...', '18.08.2017 12:05'],
  ['Сухановская 3-40 - Ли...', '17.08.2017 11:31'],
  ['Сухановская 3-40  рас...', '17.08.2017 11:32'],
  ['Сухановская 3-40  рас...', '17.08.2017 11:33'],
  ['Сухановская 3-121 ра...', '17.08.2017 11:40'],
  ['Сухановская 3-121', '21.08.2017 7:41'],
  ['ТС-43', '17.08.2017 6:12'],
];

const quick: [string, number, React.ReactNode][] = [
  ['Создать', 28, <NewIcon />], ['Открыть', 25, <OpenIcon />], ['Открыть из сети', 26, <OpenWebIcon />],
  ['Сохранить', 26, <SaveIcon />], ['Сохранить как', 26, <SaveAsIcon />], ['Печать', 26, <PrintIcon />],
  ['Отменить', 25, <UndoIcon />], ['Список отмены', 13, <Down />],
  ['Повторить', 25, <UndoIcon c="#8e8d90" f />], ['Список повтора', 12, <Down />],
];

const status: [string, number, React.ReactNode][][] = [
  [['Модель', 61, 'МОДЕЛЬ']],
  [['Сетка', 26, <GridIcon />], ['Шаг', 26, <SnapIcon />], ['Параметры шага', 16, <Down w={8} c="#fff" />]],
  [['Орто', 26, <OrthoIcon />], ['Полярное отслеживание', 24, <PolarIcon />], ['Углы', 18, <Down w={8} c="#fff" />], ['Изометрия', 26, <IsoIcon />], ['Плоскости', 15, <Down w={8} c="#fff" />]],
  [['Отслеживание', 24, <TrackIcon />], ['Привязка', 28, <OsnapIcon />], ['Виды привязки', 15, <Down w={8} c="#fff" />]],
  [['Видимость аннотаций', 26, <AnnoIcon c={blue} k={1} />], ['Автомасштаб', 26, <AnnoIcon k={2} />], ['Аннотации', 24, <AnnoIcon />], ['Масштаб', 24, '1:1'], ['Список масштабов', 13, <Down w={8} c="#fff" />]],
  [['Рабочее пространство', 26, <GearIcon />], ['Список пространств', 16, <Down w={8} c="#fff" />]],
  [['Монитор аннотаций', 25, <PlusIcon />]],
  [['Изоляция объектов', 27, <IsolateIcon />]],
  [['Аппаратное ускорение', 28, <PerfIcon />]],
  [['Блокировка интерфейса', 24, <LockUiIcon />]],
  [['Полный экран', 26, <FullIcon />], ['Адаптация', 27, <MenuIcon />]],
];

const RibbonTool = ({ w, label, icon }: { w: number; label: string; icon: React.ReactNode }) => (
  <Tool $w={w}>{icon}<ToolLabel>{label}</ToolLabel></Tool>
);

const OpenDialog = () => (
  <DialogLayer>
    <Dialog role="dialog" aria-labelledby="dlg-title">
      <DialogTitle>
        <DialogLogo />
        <h2 id="dlg-title">Выбор файла внешней ссылки</h2>
        <IconButton $w={26} aria-label="Закрыть"><Cross s={13} /></IconButton>
      </DialogTitle>
      <DialogBody>
        <FolderRow>
          <label htmlFor="folder">Папка:</label>
          <Combo $w={252}>
            <FolderSelect id="folder"><option>Рабочий стол</option></FolderSelect>
            <ComboIcon><Desktop /></ComboIcon>
            <ComboArrow><Chevron c="#858587" w={1.4} /></ComboArrow>
          </Combo>
          <IconButton $w={30} aria-label="Назад"><BackIcon /></IconButton>
          <IconButton $w={25} aria-label="Вверх"><UpIcon /></IconButton>
          <IconButton $w={28} aria-label="Поиск в сети"><WebIcon /></IconButton>
          <IconButton $w={27} aria-label="Удалить"><DeleteIcon /></IconButton>
          <IconButton $w={26} aria-label="Создать папку"><NewFolderIcon /></IconButton>
          <MenuButton $w={53}><span>В<u>и</u>д</span><Down w={9} c="#111" /></MenuButton>
          <MenuButton $w={76}><span>С<u>е</u>рвис</span><Down w={9} c="#111" /></MenuButton>
        </FolderRow>
        <Middle>
          <Places aria-label="Папки">
            {places.map(([name, icon], i) => (
              <Place key={name} $active={i === 4}><span>{icon}</span>{name}</Place>
            ))}
          </Places>
          <Right>
            <ListRow>
              <ListBox>
                <TableClip>
                  <FileTable>
                    <thead>
                      <tr><th>Имя<SortMark><Chevron r={180} c="#8a8a8c" w={1.2} /></SortMark></th><th>Дата изменения</th></tr>
                    </thead>
                    <tbody>
                      {files.map(([name, date, icon], i) => (
                        <tr key={i}><td><FileName>{icon ?? <PdfIcon />}{name}</FileName></td><td>{date}</td></tr>
                      ))}
                    </tbody>
                  </FileTable>
                </TableClip>
                <VScroll><Chevron r={180} /><VThumb /><Chevron /></VScroll>
                <HScroll><Chevron r={90} /><HThumb /><Chevron r={-90} /></HScroll>
              </ListBox>
              <Preview><legend>Просмотр</legend></Preview>
            </ListRow>
            <Fields>
              <label htmlFor="fname">Имя файла:</label>
              <Combo $w={363} $edit><input id="fname" type="text" /><ComboArrow><Chevron c="#858587" w={1.4} /></ComboArrow></Combo>
              <Actions>
                <PushButton>От<u>к</u>рыть</PushButton>
                <PushButton $w={16} aria-label="Варианты открытия"><Down w={10} c="#111" /></PushButton>
              </Actions>
              <label htmlFor="ftype">Тип файла:</label>
              <Combo $w={363}><select id="ftype"><option>Файлы PDF (*.pdf)</option></select><ComboArrow><Chevron c="#858587" w={1.4} /></ComboArrow></Combo>
              <Actions><PushButton>Отмена</PushButton></Actions>
            </Fields>
          </Right>
        </Middle>
      </DialogBody>
      <Pointer width="14" height="21" viewBox="0 0 14 21"><path d="M1 1v16l4-4 3 7 3-1-3-7h5z" fill="#fff" stroke="#222" /></Pointer>
    </Dialog>
  </DialogLayer>
);

export default function App() {
  return (
    <Screen>
      <GlobalStyle />
      <AppWindow>
        <Header>
          <AppButton aria-label="Меню приложения"><Logo /><Down w={7} c="#2c2c2e" /></AppButton>
          <TitleRow>
            <QuickBar>
              {quick.map(([name, w, icon]) => <QuickButton key={name} $w={w} aria-label={name}>{icon}</QuickButton>)}
              <QuickButton $w={25} $on aria-label="Рабочее пространство"><WorkspaceIcon /></QuickButton>
              <QuickButton $w={18} aria-label="Настройка панели"><QuickMore /></QuickButton>
            </QuickBar>
            <WindowTitle><span>Autodesk AutoCAD 2017</span><span>Чертеж15.dwg</span></WindowTitle>
            <InfoBar>
              <InfoButton $w={15} aria-label="Свернуть поиск"><svg width="5" height="9" viewBox="0 0 5 9"><path d="M0 0l5 4.500L0 9z" fill="#fff" /></svg></InfoButton>
              <SearchInput aria-label="Поиск" placeholder="Введите ключевое слово/фразу" />
              <InfoButton $w={26} aria-label="Найти"><Binoculars /></InfoButton>
              <InfoButton $w={126}><UserIcon />Вход в службы<Down w={5} /></InfoButton>
              <InfoButton $w={30} aria-label="Exchange"><ExchangeIcon /></InfoButton>
              <InfoButton $w={34} aria-label="A360"><A360Icon /><Down w={5} /></InfoButton>
              <InfoDivider />
              <InfoButton $w={36} $gap={10} aria-label="Справка"><HelpIcon /><Down /></InfoButton>
            </InfoBar>
            <WindowButtons>
              <WindowButton aria-label="Свернуть"><svg width="12" height="12"><path d="M0 6.500h11" stroke="#111" /></svg></WindowButton>
              <WindowButton aria-label="Развернуть"><svg width="12" height="12"><path d="M.5.5h10v10H.5z" fill="none" stroke="#111" /></svg></WindowButton>
              <WindowButton aria-label="Закрыть"><Cross /></WindowButton>
            </WindowButtons>
          </TitleRow>
          <RibbonTabs aria-label="Лента">
            {ribbonTabs.map(([name, w], i) => <RibbonTab key={name} $w={w} $active={i === 1}>{name}</RibbonTab>)}
            <InfoButton $w={78} aria-label="Свернуть ленту"><RibbonToggle /><Down w={5} /></InfoButton>
          </RibbonTabs>
        </Header>

        <Ribbon>
          <Panel $w={167}>
            <PanelTools>
              <RibbonTool w={59} label="Вставка" icon={<InsertIcon />} />
              <RibbonTool w={95} label={'Редактировать\nатрибут'} icon={<EditAttrIcon />} />
              <ToolArrow aria-label="Варианты правки"><Down /></ToolArrow>
            </PanelTools>
            <PanelTitle>Блок<Down w={8} /></PanelTitle>
          </Panel>
          <Panel $w={280}>
            <PanelTools>
              <RibbonTool w={64} label={'Создать\nблок'} icon={<CreateBlockIcon />} />
              <ToolArrow aria-label="Варианты блока"><Down /></ToolArrow>
              <RibbonTool w={68} label={'Задание\nатрибутов'} icon={<DefineAttrIcon />} />
              <RibbonTool w={72} label={'Управление\nатрибутами'} icon={<ManageAttrIcon />} />
              <RibbonTool w={68} label="Редактор" icon={<BlockEditIcon />} />
            </PanelTools>
            <PanelTitle>Определение блока<Down w={8} /></PanelTitle>
          </Panel>
          <Panel $w={289}>
            <PanelTools>
              <RibbonTool w={92} label="Подсоединить" icon={<AttachIcon />} />
              <RibbonTool w={72} label="Подрезать" icon={<ClipIcon />} />
              <RibbonTool w={86} label="Регулировать" icon={<AdjustIcon />} />
              <SmallTools>
                <SmallRow><LayersIcon /></SmallRow>
                <SmallRow><FrameIcon /><Down /></SmallRow>
              </SmallTools>
            </PanelTools>
            <PanelTitle>Ссылка</PanelTitle>
          </Panel>
          <Panel $w={122}>
            <PanelTools>
              <RibbonTool w={64} label="Autodesk" icon={<Cloud360Icon />} />
              <RibbonTool w={56} label="Вставить" icon={<CloudInsertIcon />} />
            </PanelTools>
            <PanelTitle>Облако</PanelTitle>
          </Panel>
          <NarrowPanel><NarrowLabel>Импорт</NarrowLabel></NarrowPanel>
          <NarrowPanel><NarrowLabel>Данные</NarrowLabel></NarrowPanel>
          <NarrowPanel><NarrowLabel>Связыва...</NarrowLabel></NarrowPanel>
          <NarrowPanel><Tool $w={62}><GlobeIcon />Местоп...</Tool><Down w={8} /></NarrowPanel>
          <NarrowPanel><Tool $w={62}><ContentIcon />Содер...</Tool><Down w={8} /></NarrowPanel>
        </Ribbon>

        <FileTabs aria-label="Чертежи">
          <FileTab>Начало</FileTab>
          <FileTab>Чертеж14*<Cross s={9} c="#333235" w={2} /></FileTab>
          <FileTab $active>Чертеж15*</FileTab>
        </FileTabs>

        <Work>
          <PaletteStrip><PaletteTitle><span>Свойства</span></PaletteTitle></PaletteStrip>
          <DrawColumn>
            <Canvas>
              <GridLayer aria-hidden="true">
                <defs>
                  <pattern id="minor" width="9.040" height="9.050" patternUnits="userSpaceOnUse" x="38" y="4"><path d="M.5 0v9.050M0 .5h9.040" stroke="#232933" fill="none" /></pattern>
                  <pattern id="major" width="45.200" height="45.250" patternUnits="userSpaceOnUse" x="38" y="4"><path d="M.5 0v45.250M0 .5h45.200" stroke="#2c333d" fill="none" /></pattern>
                </defs>
                <rect width="100%" height="100%" fill="url(#minor)" />
                <rect width="100%" height="100%" fill="url(#major)" />
              </GridLayer>
              <CanvasLeft><span>[−][Сверху][2D-каркас]</span><UcsMark /></CanvasLeft>
              <CanvasRight>
                <CanvasControls>
                  <ViewButton aria-label="Свернуть вид"><svg width="11" height="4"><path d="M0 2h11" stroke="#fff" strokeWidth="3" /></svg></ViewButton>
                  <ViewButton aria-label="Восстановить вид"><svg width="12" height="12"><path d="M4 3V1h7v7H9M1 4h7v7H1z" fill="none" stroke="#fff" strokeWidth="1.800" /></svg></ViewButton>
                  <ViewButton aria-label="Закрыть вид"><Cross s={10} c="#fff" w={2.600} /></ViewButton>
                </CanvasControls>
                <ViewCube />
                <UcsButton>МСК</UcsButton>
              </CanvasRight>
            </Canvas>
            <CommandArea>
              <CommandGrip>
                <svg width="18" height="6"><path d="M0 1h18M0 4h18" stroke="#c2c1c3" strokeDasharray="1.500 1.500" /></svg>
                <Cross s={11} c="#fff" w={2.400} />
                <svg width="17" height="17" viewBox="0 0 17 17"><path d="M1 5l3 1 2-2-1-3c4-1 6 2 5 5l6 7-3 3-7-7C3 10 0 8 1 5z" fill="#eee" /></svg>
              </CommandGrip>
              <CommandLines>
                <CommandHistory>Команда:</CommandHistory>
                <CommandPrompt>
                  <svg width="17" height="15" viewBox="0 0 17 15"><path d="M.5.5h16v14H.5z" fill="#dededf" stroke="#b5b5b7" /><path d="M3 4l4 3-4 3M8 11h6" fill="none" stroke="#444" strokeWidth="1.300" /></svg>
                  <Down w={6} c="#8a8a8c" />
                  <input aria-label="Командная строка" defaultValue="_attach" />
                </CommandPrompt>
              </CommandLines>
            </CommandArea>
          </DrawColumn>
        </Work>

        <BottomRow>
          <LayoutTabs aria-label="Листы">
            <LayoutTab $w={76} $active>Модель</LayoutTab>
            <LayoutTab $w={56}>Лист1</LayoutTab>
            <LayoutTab $w={60}>Лист2</LayoutTab>
            <LayoutTab $w={27} aria-label="Новый лист"><PlusIcon s={9} /></LayoutTab>
          </LayoutTabs>
          <StatusBar>
            {status.map((group, i) => (
              <StatusGroup key={i}>
                {group.map(([name, w, icon]) => <StatusButton key={name} $w={w} aria-label={name}>{icon}</StatusButton>)}
              </StatusGroup>
            ))}
          </StatusBar>
        </BottomRow>
      </AppWindow>
      <Taskbar>
        <TaskItem $left={24} $w={33} $c="#5f9a46" />
        <TaskItem $left={210} $w={28} $c="#b9cfe2" />
        <TaskItem $left={210} $w={38} $c="#c33a2c" />
      </Taskbar>
      <Watermark>Video<br />CAD<br />Lessons</Watermark>
      <OpenDialog />
    </Screen>
  );
}
